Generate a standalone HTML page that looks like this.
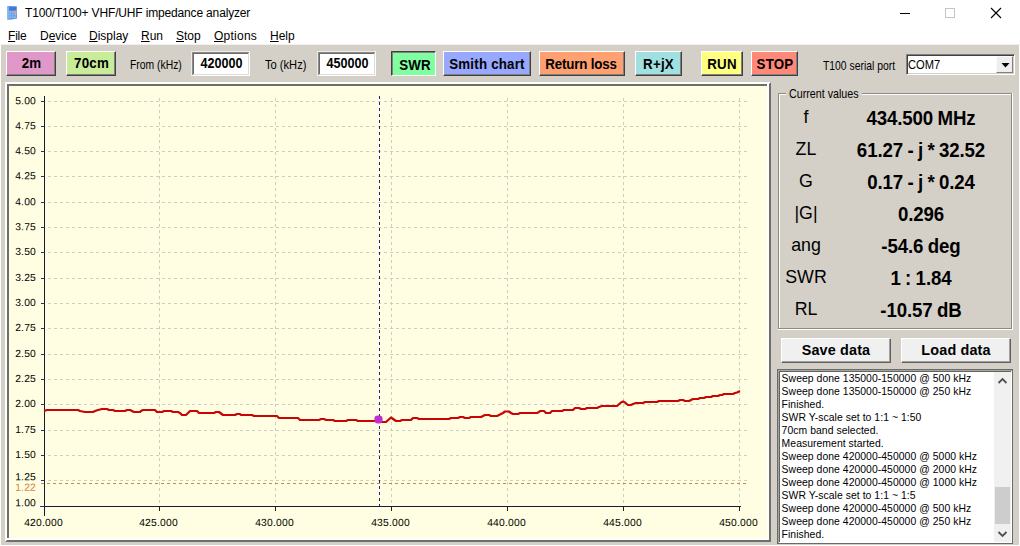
<!DOCTYPE html>
<html><head><meta charset="utf-8"><title>T100/T100+ VHF/UHF impedance analyzer</title>
<style>
html,body{margin:0;padding:0}
body{width:1020px;height:546px;position:relative;overflow:hidden;background:#fff;font-family:"Liberation Sans",Arial,sans-serif;color:#000}
div,span{box-sizing:border-box}
.abs{position:absolute;white-space:nowrap}
.b{position:absolute;text-align:center;font-weight:bold;white-space:nowrap;overflow:hidden}
.menu span{position:absolute;top:28px;font-size:12px;line-height:16px;white-space:nowrap}
.menu u{text-decoration:underline;text-underline-offset:1px}
.lbl{position:absolute;white-space:nowrap;font-size:12.1px;line-height:14px;transform-origin:0 0;color:#000}
.edit{position:absolute;background:#fff;border:1px solid;border-color:#ececea #fff #fff #ececea;box-shadow:inset 1px 1px 0 #8a8a88, inset -1px -1px 0 #dedcd6, inset 2px 2px 0 #6c6c6a;font-weight:bold;font-size:12.6px;text-align:center}
.edit span{display:inline-block;transform:scale(1,1.12)}
.k{position:absolute;width:60px;text-align:center;font-size:17.8px;line-height:20px;white-space:nowrap}
.v{position:absolute;width:200px;text-align:center;font-size:18.67px;font-weight:bold;line-height:22px;white-space:nowrap;letter-spacing:-0.1px;word-spacing:-0.7px;transform:scale(1,1.08)}
.memo div{height:13px;line-height:13px;white-space:nowrap}
</style></head><body>
<!-- title bar -->
<svg class="abs" style="left:6px;top:5px" width="13" height="16" viewBox="6 5 13 16">
<path d="M7.3 6 L16.8 6.2 L17 18.6 L12 19.6 L7.4 19.8 Z" fill="#5b94dc"/>
<rect x="7.2" y="6.4" width="1.6" height="13" fill="#8fb8ea"/>
<rect x="9.2" y="7.2" width="7" height="3" fill="#3f78d6"/>
<rect x="9.2" y="11" width="7" height="7.2" fill="#8cbcf0"/>
<path d="M9.2 13.4 H16.2 M9.2 15.8 H16.2 M11.5 11 V18.2 M13.9 11 V18.2" stroke="#5f9be0" stroke-width="0.7" fill="none"/>
<rect x="14.3" y="10.8" width="2.2" height="3.2" fill="#dc9a9e"/>
</svg>
<div class="abs" id="title" style="left:25px;top:5px;font-size:12px;line-height:16px;letter-spacing:-0.16px">T100/T100+ VHF/UHF impedance analyzer</div>
<svg class="abs" style="left:890px;top:0" width="130" height="30" viewBox="0 0 130 30">
<line x1="10" x2="20" y1="13.5" y2="13.5" stroke="#000" stroke-width="1"/>
<rect x="55.5" y="8.5" width="9" height="9" fill="none" stroke="#c4c4c4" stroke-width="1"/>
<path d="M101 8 L111 18 M111 8 L101 18" stroke="#000" stroke-width="1.1" fill="none"/></svg>
<!-- menu -->
<div class="menu">
<span style="left:8px;letter-spacing:-0.2px"><u>F</u>ile</span>
<span style="left:40px">D<u>e</u>vice</span>
<span style="left:89px"><u>D</u>isplay</span>
<span style="left:141px"><u>R</u>un</span>
<span style="left:176px"><u>S</u>top</span>
<span style="left:214px;letter-spacing:0.25px"><u>O</u>ptions</span>
<span style="left:270px"><u>H</u>elp</span>
</div>
<!-- client -->
<div class="abs" style="left:0;top:44px;width:1020px;height:1px;background:#f0f0f0"></div>
<div class="abs" style="left:1px;top:45px;width:1018px;height:500px;background:#d4d0c8"></div>
<div class="b" style="left:6px;top:51px;width:50px;height:25px;background:#e098c8;border:1px solid;border-color:#fff #404040 #404040 #fff;box-shadow:inset -1px -1px 0 #808080;padding-left:1px;font-size:13.33px;letter-spacing:0.2px;line-height:23px;"><span style="display:inline-block;transform:scale(1,1.08)">2m</span></div>
<div class="b" style="left:66px;top:51px;width:50px;height:25px;background:#c8ec98;border:1px solid;border-color:#fff #404040 #404040 #fff;box-shadow:inset -1px -1px 0 #808080;padding-left:1px;font-size:13.33px;letter-spacing:0.2px;line-height:23px;"><span style="display:inline-block;transform:scale(1,1.08)">70cm</span></div>
<div class="lbl" id="lfrom" style="left:130px;top:57.6px;transform:scaleX(0.857)">From (kHz)</div>
<div class="edit" style="left:191px;top:51px;width:59px;height:25px;line-height:24px;padding-left:2px"><span>420000</span></div>
<div class="lbl" id="lto" style="left:265px;top:57.6px;transform:scaleX(0.92)">To (kHz)</div>
<div class="edit" style="left:317px;top:51px;width:59px;height:25px;line-height:24px;padding-left:2px"><span>450000</span></div>
<div class="b" style="left:391px;top:51px;width:45px;height:25px;background:#80ffa0;border:1px solid;border-color:#404040 #fff #fff #404040;box-shadow:inset 1px 1px 0 #808080;padding:2px 0 0 3px;font-size:13.33px;letter-spacing:0.2px;line-height:23px;"><span style="display:inline-block;transform:scale(1,1.08)">SWR</span></div>
<div class="b" style="left:443px;top:51px;width:88px;height:25px;background:#98a8ff;border:1px solid;border-color:#fff #404040 #404040 #fff;box-shadow:inset -1px -1px 0 #808080;padding-top:1px;font-size:13.33px;letter-spacing:0.2px;line-height:23px;"><span style="display:inline-block;transform:scale(1,1.08)">Smith chart</span></div>
<div class="b" style="left:539px;top:51px;width:86px;height:25px;background:#ffa070;border:1px solid;border-color:#fff #404040 #404040 #fff;box-shadow:inset -1px -1px 0 #808080;padding-top:1px;font-size:13.33px;letter-spacing:-0.15px;line-height:23px;padding-right:2px;"><span style="display:inline-block;transform:scale(1,1.08)">Return loss</span></div>
<div class="b" style="left:635px;top:51px;width:47px;height:25px;background:#a0e0e0;border:1px solid;border-color:#fff #404040 #404040 #fff;box-shadow:inset -1px -1px 0 #808080;padding-top:1px;font-size:13.33px;letter-spacing:0.2px;line-height:23px;"><span style="display:inline-block;transform:scale(1,1.08)">R+jX</span></div>
<div class="b" style="left:701px;top:51px;width:42px;height:25px;background:#ffff80;border:1px solid;border-color:#fff #404040 #404040 #fff;box-shadow:inset -1px -1px 0 #808080;padding-top:1px;font-size:13.33px;letter-spacing:0.2px;line-height:23px;"><span style="display:inline-block;transform:scale(1,1.08)">RUN</span></div>
<div class="b" style="left:751px;top:51px;width:47px;height:25px;background:#ff8878;border:1px solid;border-color:#fff #404040 #404040 #fff;box-shadow:inset -1px -1px 0 #808080;padding-top:1px;font-size:13.33px;letter-spacing:0.2px;line-height:23px;padding-left:1px;"><span style="display:inline-block;transform:scale(1,1.08)">STOP</span></div>
<div class="lbl" id="lport" style="left:823px;top:58.6px;transform:scaleX(0.857)">T100 serial port</div>
<div class="abs" style="left:906px;top:54px;width:109px;height:21px;background:#fff;border:1px solid;border-color:#808080 #fff #fff #808080;box-shadow:inset 1px 1px 0 #404040, inset -1px -1px 0 #d4d0c8">
 <div class="lbl" id="lcom" style="left:1.4px;top:3px;font-size:12.4px;transform:scaleX(0.9)">COM7</div>
 <div class="abs" style="right:1px;top:1px;width:17px;height:17px;background:#eeeeee;border:1px solid;border-color:#fafafa #808080 #808080 #fafafa"></div>
 <svg class="abs" style="right:4px;top:7.5px" width="9" height="5" viewBox="0 0 9 5"><path d="M0.5 0 L8.5 0 L4.5 4.5 Z" fill="#000"/></svg>
</div>
<!-- chart panel -->
<div class="abs" style="left:5px;top:82px;width:766px;height:460px;background:#fffee2;border:2px solid;border-color:#fff #6e6e6a #6e6e6a #fff;box-shadow:inset -2px -2px 0 #fff, inset 2px 2px 0 #6e6e6a"></div>
<svg width="1020" height="546" viewBox="0 0 1020 546" style="position:absolute;left:0;top:0" font-family="'Liberation Sans',Arial,sans-serif">
<line x1="48" x2="747" y1="101.5" y2="101.5" stroke="#cdcdc1" stroke-width="1" stroke-dasharray="3 3" shape-rendering="crispEdges"/>
<line x1="48" x2="747" y1="126.5" y2="126.5" stroke="#cdcdc1" stroke-width="1" stroke-dasharray="3 3" shape-rendering="crispEdges"/>
<line x1="48" x2="747" y1="151.5" y2="151.5" stroke="#cdcdc1" stroke-width="1" stroke-dasharray="3 3" shape-rendering="crispEdges"/>
<line x1="48" x2="747" y1="176.5" y2="176.5" stroke="#cdcdc1" stroke-width="1" stroke-dasharray="3 3" shape-rendering="crispEdges"/>
<line x1="48" x2="747" y1="202.5" y2="202.5" stroke="#cdcdc1" stroke-width="1" stroke-dasharray="3 3" shape-rendering="crispEdges"/>
<line x1="48" x2="747" y1="227.5" y2="227.5" stroke="#cdcdc1" stroke-width="1" stroke-dasharray="3 3" shape-rendering="crispEdges"/>
<line x1="48" x2="747" y1="252.5" y2="252.5" stroke="#cdcdc1" stroke-width="1" stroke-dasharray="3 3" shape-rendering="crispEdges"/>
<line x1="48" x2="747" y1="278.5" y2="278.5" stroke="#cdcdc1" stroke-width="1" stroke-dasharray="3 3" shape-rendering="crispEdges"/>
<line x1="48" x2="747" y1="303.5" y2="303.5" stroke="#cdcdc1" stroke-width="1" stroke-dasharray="3 3" shape-rendering="crispEdges"/>
<line x1="48" x2="747" y1="328.5" y2="328.5" stroke="#cdcdc1" stroke-width="1" stroke-dasharray="3 3" shape-rendering="crispEdges"/>
<line x1="48" x2="747" y1="354.5" y2="354.5" stroke="#cdcdc1" stroke-width="1" stroke-dasharray="3 3" shape-rendering="crispEdges"/>
<line x1="48" x2="747" y1="379.5" y2="379.5" stroke="#cdcdc1" stroke-width="1" stroke-dasharray="3 3" shape-rendering="crispEdges"/>
<line x1="48" x2="747" y1="404.5" y2="404.5" stroke="#cdcdc1" stroke-width="1" stroke-dasharray="3 3" shape-rendering="crispEdges"/>
<line x1="48" x2="747" y1="430.5" y2="430.5" stroke="#cdcdc1" stroke-width="1" stroke-dasharray="3 3" shape-rendering="crispEdges"/>
<line x1="48" x2="747" y1="455.5" y2="455.5" stroke="#cdcdc1" stroke-width="1" stroke-dasharray="3 3" shape-rendering="crispEdges"/>
<line x1="48" x2="747" y1="480.5" y2="480.5" stroke="#cdcdc1" stroke-width="1" stroke-dasharray="3 3" shape-rendering="crispEdges"/>
<line x1="159.5" x2="159.5" y1="98" y2="506" stroke="#cdcdc1" stroke-width="1" stroke-dasharray="3 3" shape-rendering="crispEdges"/>
<line x1="159.5" x2="159.5" y1="506" y2="511" stroke="#202020" stroke-width="1" shape-rendering="crispEdges"/>
<line x1="275.5" x2="275.5" y1="98" y2="506" stroke="#cdcdc1" stroke-width="1" stroke-dasharray="3 3" shape-rendering="crispEdges"/>
<line x1="275.5" x2="275.5" y1="506" y2="511" stroke="#202020" stroke-width="1" shape-rendering="crispEdges"/>
<line x1="391.5" x2="391.5" y1="98" y2="506" stroke="#cdcdc1" stroke-width="1" stroke-dasharray="3 3" shape-rendering="crispEdges"/>
<line x1="391.5" x2="391.5" y1="506" y2="511" stroke="#202020" stroke-width="1" shape-rendering="crispEdges"/>
<line x1="507.5" x2="507.5" y1="98" y2="506" stroke="#cdcdc1" stroke-width="1" stroke-dasharray="3 3" shape-rendering="crispEdges"/>
<line x1="507.5" x2="507.5" y1="506" y2="511" stroke="#202020" stroke-width="1" shape-rendering="crispEdges"/>
<line x1="623.5" x2="623.5" y1="98" y2="506" stroke="#cdcdc1" stroke-width="1" stroke-dasharray="3 3" shape-rendering="crispEdges"/>
<line x1="623.5" x2="623.5" y1="506" y2="511" stroke="#202020" stroke-width="1" shape-rendering="crispEdges"/>
<line x1="739.5" x2="739.5" y1="98" y2="506" stroke="#cdcdc1" stroke-width="1" stroke-dasharray="3 3" shape-rendering="crispEdges"/>
<line x1="739.5" x2="739.5" y1="506" y2="511" stroke="#202020" stroke-width="1" shape-rendering="crispEdges"/>
<line x1="41" x2="747" y1="483.5" y2="483.5" stroke="#d2853a" stroke-width="1" stroke-dasharray="3 3" shape-rendering="crispEdges"/>
<line x1="44.5" x2="44.5" y1="96" y2="516" stroke="#1a1a30" stroke-width="1" shape-rendering="crispEdges"/>
<line x1="44" x2="741" y1="506.5" y2="506.5" stroke="#1a1a30" stroke-width="1" shape-rendering="crispEdges"/>
<line x1="41" x2="44" y1="101.5" y2="101.5" stroke="#2a2a90" stroke-width="1" shape-rendering="crispEdges"/>
<line x1="41" x2="44" y1="126.5" y2="126.5" stroke="#2a2a90" stroke-width="1" shape-rendering="crispEdges"/>
<line x1="41" x2="44" y1="151.5" y2="151.5" stroke="#2a2a90" stroke-width="1" shape-rendering="crispEdges"/>
<line x1="41" x2="44" y1="176.5" y2="176.5" stroke="#2a2a90" stroke-width="1" shape-rendering="crispEdges"/>
<line x1="41" x2="44" y1="202.5" y2="202.5" stroke="#2a2a90" stroke-width="1" shape-rendering="crispEdges"/>
<line x1="41" x2="44" y1="227.5" y2="227.5" stroke="#2a2a90" stroke-width="1" shape-rendering="crispEdges"/>
<line x1="41" x2="44" y1="252.5" y2="252.5" stroke="#2a2a90" stroke-width="1" shape-rendering="crispEdges"/>
<line x1="41" x2="44" y1="278.5" y2="278.5" stroke="#2a2a90" stroke-width="1" shape-rendering="crispEdges"/>
<line x1="41" x2="44" y1="303.5" y2="303.5" stroke="#2a2a90" stroke-width="1" shape-rendering="crispEdges"/>
<line x1="41" x2="44" y1="328.5" y2="328.5" stroke="#2a2a90" stroke-width="1" shape-rendering="crispEdges"/>
<line x1="41" x2="44" y1="354.5" y2="354.5" stroke="#2a2a90" stroke-width="1" shape-rendering="crispEdges"/>
<line x1="41" x2="44" y1="379.5" y2="379.5" stroke="#2a2a90" stroke-width="1" shape-rendering="crispEdges"/>
<line x1="41" x2="44" y1="404.5" y2="404.5" stroke="#2a2a90" stroke-width="1" shape-rendering="crispEdges"/>
<line x1="41" x2="44" y1="430.5" y2="430.5" stroke="#2a2a90" stroke-width="1" shape-rendering="crispEdges"/>
<line x1="41" x2="44" y1="455.5" y2="455.5" stroke="#2a2a90" stroke-width="1" shape-rendering="crispEdges"/>
<line x1="41" x2="44" y1="480.5" y2="480.5" stroke="#2a2a90" stroke-width="1" shape-rendering="crispEdges"/>
<line x1="40" x2="44" y1="506.5" y2="506.5" stroke="#2a2a90" stroke-width="1" shape-rendering="crispEdges"/>
<text transform="translate(36,104.3) rotate(0.03)" font-size="10.3" letter-spacing="0.2" text-anchor="end" fill="#000">5.00</text>
<text transform="translate(36,129.3) rotate(0.03)" font-size="10.3" letter-spacing="0.2" text-anchor="end" fill="#000">4.75</text>
<text transform="translate(36,154.2) rotate(0.03)" font-size="10.3" letter-spacing="0.2" text-anchor="end" fill="#000">4.50</text>
<text transform="translate(36,179.2) rotate(0.03)" font-size="10.3" letter-spacing="0.2" text-anchor="end" fill="#000">4.25</text>
<text transform="translate(36,205.2) rotate(0.03)" font-size="10.3" letter-spacing="0.2" text-anchor="end" fill="#000">4.00</text>
<text transform="translate(36,230.2) rotate(0.03)" font-size="10.3" letter-spacing="0.2" text-anchor="end" fill="#000">3.75</text>
<text transform="translate(36,255.1) rotate(0.03)" font-size="10.3" letter-spacing="0.2" text-anchor="end" fill="#000">3.50</text>
<text transform="translate(36,281.1) rotate(0.03)" font-size="10.3" letter-spacing="0.2" text-anchor="end" fill="#000">3.25</text>
<text transform="translate(36,306.1) rotate(0.03)" font-size="10.3" letter-spacing="0.2" text-anchor="end" fill="#000">3.00</text>
<text transform="translate(36,331.0) rotate(0.03)" font-size="10.3" letter-spacing="0.2" text-anchor="end" fill="#000">2.75</text>
<text transform="translate(36,357.0) rotate(0.03)" font-size="10.3" letter-spacing="0.2" text-anchor="end" fill="#000">2.50</text>
<text transform="translate(36,382.0) rotate(0.03)" font-size="10.3" letter-spacing="0.2" text-anchor="end" fill="#000">2.25</text>
<text transform="translate(36,406.9) rotate(0.03)" font-size="10.3" letter-spacing="0.2" text-anchor="end" fill="#000">2.00</text>
<text transform="translate(36,432.9) rotate(0.03)" font-size="10.3" letter-spacing="0.2" text-anchor="end" fill="#000">1.75</text>
<text transform="translate(36,457.9) rotate(0.03)" font-size="10.3" letter-spacing="0.2" text-anchor="end" fill="#000">1.50</text>
<text transform="translate(36,480.3) rotate(0.03)" font-size="10.3" letter-spacing="0.2" text-anchor="end" fill="#000">1.25</text>
<text transform="translate(36,506.3) rotate(0.03)" font-size="10.3" letter-spacing="0.2" text-anchor="end" fill="#000">1.00</text>
<text transform="translate(36,490.8) rotate(0.03)" font-size="10.3" letter-spacing="0.2" text-anchor="end" fill="#d2853a">1.22</text>
<text transform="translate(43.5,526) rotate(0.03)" font-size="10.3" letter-spacing="0.2" text-anchor="middle" fill="#000">420.000</text>
<text transform="translate(158.5,526) rotate(0.03)" font-size="10.3" letter-spacing="0.2" text-anchor="middle" fill="#000">425.000</text>
<text transform="translate(274.5,526) rotate(0.03)" font-size="10.3" letter-spacing="0.2" text-anchor="middle" fill="#000">430.000</text>
<text transform="translate(390.5,526) rotate(0.03)" font-size="10.3" letter-spacing="0.2" text-anchor="middle" fill="#000">435.000</text>
<text transform="translate(506.5,526) rotate(0.03)" font-size="10.3" letter-spacing="0.2" text-anchor="middle" fill="#000">440.000</text>
<text transform="translate(622.5,526) rotate(0.03)" font-size="10.3" letter-spacing="0.2" text-anchor="middle" fill="#000">445.000</text>
<text transform="translate(738.5,526) rotate(0.03)" font-size="10.3" letter-spacing="0.2" text-anchor="middle" fill="#000">450.000</text>
<line x1="379.5" x2="379.5" y1="96" y2="506" stroke="#202088" stroke-width="1" stroke-dasharray="3 3" shape-rendering="crispEdges"/>
<polyline points="44,411 47,410 78,410 80,411 85,412 93,412 95,411 98,410 102,409 107,409 109,410 113,410 115,411 125,411 127,410 130,410 132,411 134,412 140,412 141,411 143,410 155,410 157,412 162,412 164,411 171,411 173,412 178,412 180,413 182,415 186,415 188,413 190,411 197,411 199,413 214,413 216,412 219,412 221,413.5 223,415 235,415 237,414 240,414 241,415 252,415 254,416 277,416 279,418 298,418 300,420 319,420 321,419 324,419 326,420 333,420 335,421 346,421 348,420 356,420 358,421 375,421 382,422 386,422 391,417.5 396,421 400,421 402,420 411,420 413,418 417,418 419,419 449,419 451,418 458,418 460,417 463,417 465,418 469,418 471,417 481,417 483,416 485,415 489,415 491,416 497,416 503,413 505,411.5 509,411.5 511,413 513,414 518,414 520,413 537,413 539,412 540,411 544,411 546,413 550,413 552,411 562,411 564,410 573,410 575,408 579,408 581,409 585,409 587,408 597,408 599,407 602,406 617,406 621,402.5 623,401.5 625,402.5 628,405 631,405 633,404 636,403 643,403 645,402 657,402 659,401 678,401 680,400 683,400 685,401 689,401 691,400 693,399 698,399 700,398 704,398 706,397 711,397 713,396 718,396 720,395 722,395 724,394 733,394 735,393 737,392.5 740,391" fill="none" stroke="#c80404" stroke-width="2.2" stroke-linejoin="round"/>
<rect x="374.4" y="415.4" width="8.2" height="8" rx="3.4" fill="#bf2fd0"/>
</svg>
<!-- group box -->
<div class="abs" style="left:778px;top:93px;width:235px;height:237px;border:1px solid #fff"></div>
<div class="abs" style="left:778px;top:93px;width:234px;height:236px;border:1px solid #8a8a86;box-shadow:inset 1px 1px 0 #fff"></div>
<div class="abs" style="left:786px;top:86px;width:76px;height:14px;background:#d4d0c8"></div>
<div class="lbl" id="lcur" style="left:789px;top:86.6px;transform:scaleX(0.885)">Current values</div>
<div class="k" style="left:776px;top:107px">f</div><div class="v" style="left:821px;top:107.5px">434.500 MHz</div>
<div class="k" style="left:776px;top:139px">ZL</div><div class="v" style="left:821px;top:139.5px">61.27 - j * 32.52</div>
<div class="k" style="left:776px;top:171px">G</div><div class="v" style="left:821px;top:171.5px">0.17 - j * 0.24</div>
<div class="k" style="left:776px;top:203px">|G|</div><div class="v" style="left:821px;top:203.5px">0.296</div>
<div class="k" style="left:776px;top:235px">ang</div><div class="v" style="left:821px;top:235.5px">-54.6 deg</div>
<div class="k" style="left:776px;top:267px">SWR</div><div class="v" style="left:821px;top:267.5px">1 : 1.84</div>
<div class="k" style="left:776px;top:299px">RL</div><div class="v" style="left:821px;top:299.5px">-10.57 dB</div>
<div class="b" style="left:781px;top:338px;width:110px;height:25px;background:#f0f0f0;border:1px solid;border-color:#fff #606060 #606060 #fff;box-shadow:inset -1px -1px 0 #a0a0a0;font-size:14.4px;letter-spacing:0.15px;line-height:22px">Save data</div>
<div class="b" style="left:901px;top:338px;width:110px;height:25px;background:#f0f0f0;border:1px solid;border-color:#fff #606060 #606060 #fff;box-shadow:inset -1px -1px 0 #a0a0a0;font-size:14.4px;letter-spacing:0.15px;line-height:22px">Load data</div>
<div class="abs" style="left:777px;top:369px;width:236px;height:175px;background:#fff;border:1px solid #6a6a68;box-shadow:inset 1px 1px 0 #a4a4a0, inset -1px -1px 0 #fff, inset 2px 2px 0 #646462;overflow:hidden">
<div class="abs memo" style="left:3.6px;top:2px;font-size:10.4px;letter-spacing:0.05px">
<div>Sweep done 135000-150000 @ 500 kHz</div>
<div>Sweep done 135000-150000 @ 250 kHz</div>
<div>Finished.</div>
<div>SWR Y-scale set to 1:1 ~ 1:50</div>
<div>70cm band selected.</div>
<div>Measurement started.</div>
<div>Sweep done 420000-450000 @ 5000 kHz</div>
<div>Sweep done 420000-450000 @ 2000 kHz</div>
<div>Sweep done 420000-450000 @ 1000 kHz</div>
<div>SWR Y-scale set to 1:1 ~ 1:5</div>
<div>Sweep done 420000-450000 @ 500 kHz</div>
<div>Sweep done 420000-450000 @ 250 kHz</div>
<div>Finished.</div>
</div>
<div class="abs" style="left:216px;top:2px;width:17px;height:170px;background:#f0f0f0"></div>
<div class="abs" style="left:217px;top:117px;width:15px;height:37px;background:#cdcdcd"></div>
<svg class="abs" style="left:216px;top:2px" width="17" height="170" viewBox="0 0 17 170"><path d="M4.5 11 L8.5 7 L12.5 11" stroke="#505050" stroke-width="1.8" fill="none"/><path d="M4.5 160 L8.5 164 L12.5 160" stroke="#505050" stroke-width="1.8" fill="none"/></svg>
</div>
</body></html>
